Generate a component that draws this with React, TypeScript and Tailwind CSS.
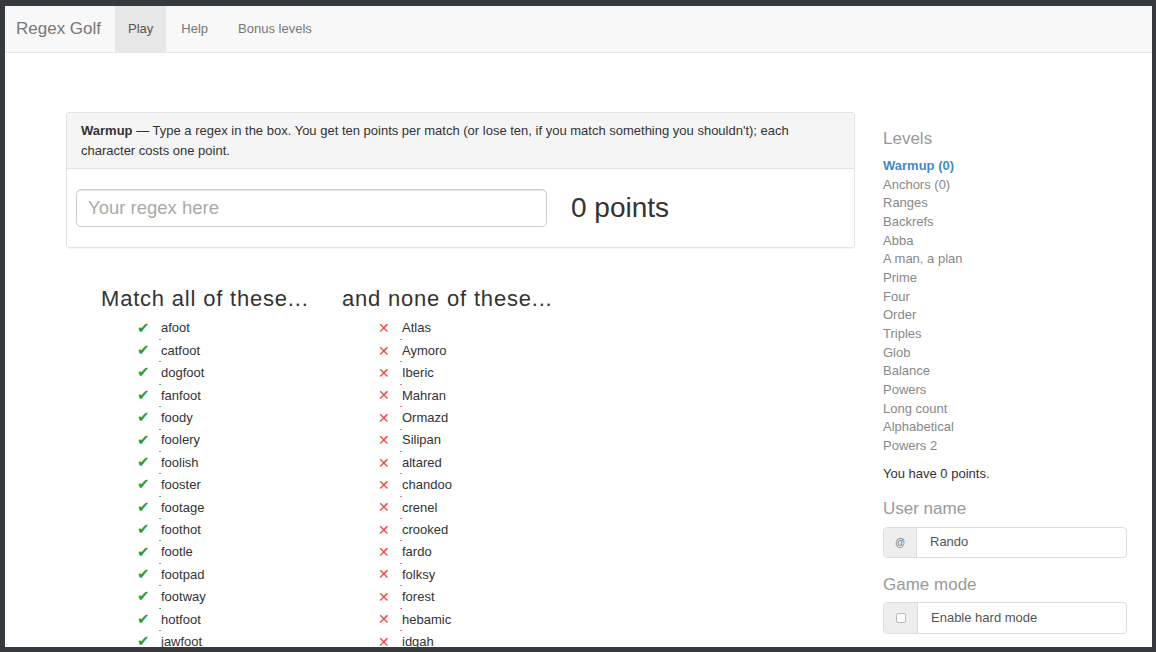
const matches = ['afoot', 'catfoot', 'dogfoot', 'fanfoot', 'foody', 'foolery', 'foolish', 'fooster', 'footage', 'foothot', 'footle', 'footpad', 'footway', 'hotfoot', 'jawfoot']
const misses = ['Atlas', 'Aymoro', 'Iberic', 'Mahran', 'Ormazd', 'Silipan', 'altared', 'chandoo', 'crenel', 'crooked', 'fardo', 'folksy', 'forest', 'hebamic', 'idgah']
const levels = ['Warmup (0)', 'Anchors (0)', 'Ranges', 'Backrefs', 'Abba', 'A man, a plan', 'Prime', 'Four', 'Order', 'Triples', 'Glob', 'Balance', 'Powers', 'Long count', 'Alphabetical', 'Powers 2']

function WordList({ words, good }: { words: string[]; good: boolean }) {
  return (
    <ul className="pl-[36px]">
      {words.map((w) => (
        <li key={w} className="flex h-[22.4px] items-center text-[13px] text-[#333]">
          <span
            className={
              good
                ? 'w-[24px] text-[15px] leading-none text-[#2f9a2f] font-["DejaVu_Sans",sans-serif]'
                : 'w-[24px] text-[14px] leading-none text-[#f04848] font-["DejaVu_Sans",sans-serif]'
            }
          >
            {good ? '✔' : '✕'}
          </span>
          <span className="relative">
            <span
              className={
                good
                  ? 'absolute -left-[2px] bottom-[-2px] h-[1px] w-[2px] bg-[#5cb85c]'
                  : 'absolute -left-[2px] bottom-[-2px] h-[1px] w-[2px] bg-[#f07070]'
              }
            />
            {w}
          </span>
        </li>
      ))}
    </ul>
  )
}

export default function App() {
  return (
    <div className="h-[652px] w-[1156px] overflow-hidden bg-[#373a3d] pt-[6px] pl-[5px] pr-[4px] font-['Liberation_Sans',Arial,sans-serif]">
      <div className="h-[641px] overflow-hidden bg-white">
        {/* Navbar */}
        <nav className="flex h-[47px] items-stretch border-b border-[#e7e7e7] bg-[#f8f8f8]">
          <div className="flex items-center pl-[11px] pr-[14px] text-[17px] text-[#777]">Regex Golf</div>
          <div className="flex items-center bg-[#e7e7e7] px-[13px] text-[13px] text-[#555]">Play</div>
          <div className="flex items-center px-[15px] text-[13px] text-[#777]">Help</div>
          <div className="flex items-center px-[15px] text-[13px] text-[#777]">Bonus levels</div>
        </nav>

        <div className="flex">
          {/* Main column */}
          <div className="ml-[61px] w-[789px] pt-[59px]">
            <div className="rounded-[3px] border border-[#e3e3e3] shadow-[0_1px_1px_rgba(0,0,0,0.05)]">
              <div className="border-b border-[#e3e3e3] bg-[#f5f5f5] px-[14px] pt-[8px] pb-[7px] text-[13px] leading-[20px] text-[#333]">
                <b>Warmup</b> — Type a regex in the box. You get ten points per match (or lose ten, if you match something you shouldn't); each character costs one point.
              </div>
              <div className="flex items-center px-[9px] pt-[18px] pb-[18px]">
                <input
                  className="h-[38px] w-[471px] rounded-[5px] border border-[#ccc] px-[11px] text-[18.5px] text-[#555] shadow-[inset_0_1px_1px_rgba(0,0,0,0.1)] outline-none placeholder:text-[#aaa]"
                  placeholder="Your regex here"
                />
                <div className="ml-[24px] text-[28px] text-[#333]">0 points</div>
              </div>
            </div>

            <div className="mt-[37px] flex pl-[35px]">
              <div className="w-[241px]">
                <h3 className="mb-[4px] text-[22px] leading-[28px] font-medium tracking-[0.8px] text-[#333]">Match all of these...</h3>
                <WordList words={matches} good />
              </div>
              <div className="w-[241px]">
                <h3 className="mb-[4px] text-[22px] leading-[28px] font-medium tracking-[0.8px] text-[#333]">and none of these...</h3>
                <WordList words={misses} good={false} />
              </div>
            </div>
          </div>

          {/* Sidebar */}
          <div className="ml-[28px] w-[244px] pt-[74px]">
            <h4 className="text-[17px] leading-[24px] text-[#999]">Levels</h4>
            <ul className="mt-[6px]">
              {levels.map((l, i) => (
                <li
                  key={l}
                  className={
                    i === 0
                      ? 'h-[18.67px] text-[13px] leading-[18.67px] font-bold text-[#428bca]'
                      : 'h-[18.67px] text-[13px] leading-[18.67px] text-[#888]'
                  }
                >
                  {l}
                </li>
              ))}
            </ul>
            <p className="mt-[9px] text-[13px] leading-[18px] text-[#333]">You have 0 points.</p>

            <h4 className="mt-[14px] text-[17px] leading-[24px] text-[#999]">User name</h4>
            <div className="mt-[6px] flex h-[31px] rounded-[4px] border border-[#ddd] text-[13px]">
              <div className="flex w-[33px] items-center justify-center rounded-l-[4px] border-r border-[#ddd] bg-[#eee] text-[10px] text-[#777]">@</div>
              <div className="flex items-center pl-[13px] text-[#555]">Rando</div>
            </div>

            <h4 className="mt-[15px] text-[17px] leading-[24px] text-[#999]">Game mode</h4>
            <div className="mt-[5px] flex h-[32px] rounded-[4px] border border-[#ddd] text-[13px]">
              <div className="flex w-[34px] items-center justify-center rounded-l-[4px] border-r border-[#ddd] bg-[#eee]">
                <span className="h-[10px] w-[10px] rounded-[2px] border border-[#bbb] bg-white" />
              </div>
              <div className="flex items-center pl-[13px] text-[#555]">Enable hard mode</div>
            </div>
          </div>
        </div>
      </div>
    </div>
  )
}
